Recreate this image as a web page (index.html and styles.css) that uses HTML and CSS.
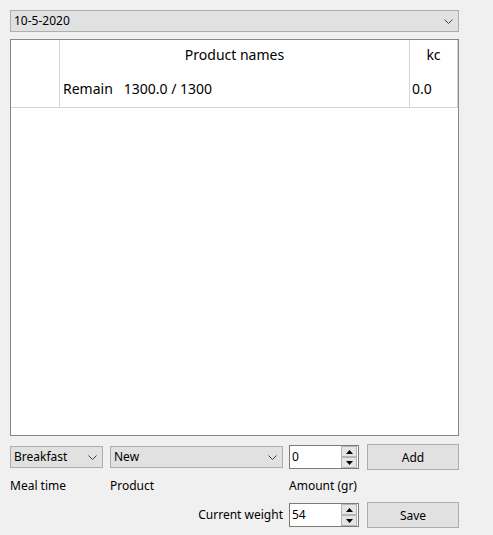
FILE: index.html
```html
<!DOCTYPE html>
<html>
<head>
<meta charset="utf-8">
<link rel="stylesheet" href="styles.css">
</head>
<body>
<div class="app">
  <div class="combo date">
    <span class="combo-text">10-5-2020</span>
    <svg class="chev" width="9" height="5" viewBox="0 0 9 5"><path d="M0.5 0.5 L4.5 4.5 L8.5 0.5" fill="none" stroke="#404040" stroke-width="1"/></svg>
  </div>
  <div class="grid">
    <div class="grow head">
      <div class="cell rh"></div>
      <div class="cell name center">Product names</div>
      <div class="cell kc center">kc</div>
    </div>
    <div class="grow data">
      <div class="cell rh"></div>
      <div class="cell name">Remain&nbsp;&nbsp;&nbsp;1300.0 / 1300</div>
      <div class="cell kc">0.0</div>
    </div>
  </div>
  <div class="row r1">
    <div class="combo meal">
      <span class="combo-text">Breakfast</span>
      <svg class="chev" width="9" height="5" viewBox="0 0 9 5"><path d="M0.5 0.5 L4.5 4.5 L8.5 0.5" fill="none" stroke="#404040" stroke-width="1"/></svg>
    </div>
    <div class="combo product">
      <span class="combo-text">New</span>
      <svg class="chev" width="9" height="5" viewBox="0 0 9 5"><path d="M0.5 0.5 L4.5 4.5 L8.5 0.5" fill="none" stroke="#404040" stroke-width="1"/></svg>
    </div>
    <div class="num">
      <span class="num-text">0</span>
      <div class="spin">
        <div class="sb"><svg width="7" height="4" viewBox="0 0 7 4"><path d="M3.5 0 L7 4 L0 4 Z" fill="#000"/></svg></div>
        <div class="sb"><svg width="7" height="4" viewBox="0 0 7 4"><path d="M0 0 L7 0 L3.5 4 Z" fill="#000"/></svg></div>
      </div>
    </div>
    <button class="btn">Add</button>
  </div>
  <div class="row labels">
    <span class="lbl l-meal">Meal time</span>
    <span class="lbl l-prod">Product</span>
    <span class="lbl l-amt">Amount (gr)</span>
  </div>
  <div class="row r3">
    <span class="lbl l-weight">Current weight</span>
    <div class="num">
      <span class="num-text">54</span>
      <div class="spin">
        <div class="sb"><svg width="7" height="4" viewBox="0 0 7 4"><path d="M3.5 0 L7 4 L0 4 Z" fill="#000"/></svg></div>
        <div class="sb"><svg width="7" height="4" viewBox="0 0 7 4"><path d="M0 0 L7 0 L3.5 4 Z" fill="#000"/></svg></div>
      </div>
    </div>
    <button class="btn">Save</button>
  </div>
</div>
</body>
</html>
```
FILE: styles.css
```css
html, body {
  margin: 0;
  padding: 0;
  background: #f0f0f0;
}
body {
  font-family: "Noto Sans", "Open Sans", sans-serif;
  font-size: 12px;
  color: #000;
}
.app {
  padding: 10px 0 0 10px;
  width: 449px;
}
.combo {
  box-sizing: border-box;
  height: 22px;
  border: 1px solid #adadad;
  background: #e1e1e1;
  display: flex;
  align-items: center;
  justify-content: space-between;
  padding: 0 5px 0 3px;
}
.combo-text {
  line-height: 16px;
}
.chev {
  display: block;
}
.date {
  width: 449px;
}
.grid {
  box-sizing: border-box;
  margin-top: 7px;
  width: 449px;
  height: 397px;
  border: 1px solid #828790;
  background: #fff;
  font-size: 14px;
}
.grow {
  display: flex;
  height: 33px;
}
.grow.head .cell {
  padding-bottom: 5px;
}
.grow.data {
  height: 34px;
  border-bottom: 1px solid #d5d5d5;
}
.grow.data .cell {
  padding-bottom: 3px;
}
.cell {
  box-sizing: border-box;
  border-right: 1px solid #d5d5d5;
  display: flex;
  align-items: center;
  padding-left: 3px;
}
.cell.center {
  justify-content: center;
  padding-left: 0;
}
.rh {
  width: 49px;
}
.name {
  width: 350px;
}
.kc {
  width: 48px;
  padding-left: 2px;
}
.row {
  display: flex;
  align-items: center;
}
.r1 {
  margin-top: 8px;
  height: 26px;
}
.meal {
  width: 93px;
}
.product {
  width: 173px;
  margin-left: 7px;
}
.num {
  box-sizing: border-box;
  width: 70px;
  height: 24px;
  border: 1px solid #7a7a7a;
  background: #fff;
  display: flex;
  align-items: center;
  justify-content: space-between;
  padding: 0 1px 0 2px;
}
.r1 .num {
  margin-left: 6px;
}
.num-text {
  line-height: 16px;
}
.spin {
  display: flex;
  flex-direction: column;
  width: 16px;
}
.sb {
  box-sizing: border-box;
  height: 11px;
  background: #e5e5e5;
  border: 1px solid #b5b5b5;
  display: flex;
  align-items: center;
  justify-content: center;
}
.btn {
  box-sizing: border-box;
  width: 92px;
  height: 26px;
  margin-left: 8px;
  border: 1px solid #adadad;
  background: #e1e1e1;
  font-family: inherit;
  font-size: 12px;
  color: #000;
  padding: 0;
}
.labels {
  margin-top: 8px;
  height: 16px;
}
.lbl {
  line-height: 16px;
}
.l-meal {
  width: 100px;
}
.l-prod {
  width: 179px;
}
.r3 {
  margin-top: 8px;
  height: 26px;
}
.l-weight {
  width: 273px;
  text-align: right;
}
.r3 .num {
  margin-left: 6px;
}
```
